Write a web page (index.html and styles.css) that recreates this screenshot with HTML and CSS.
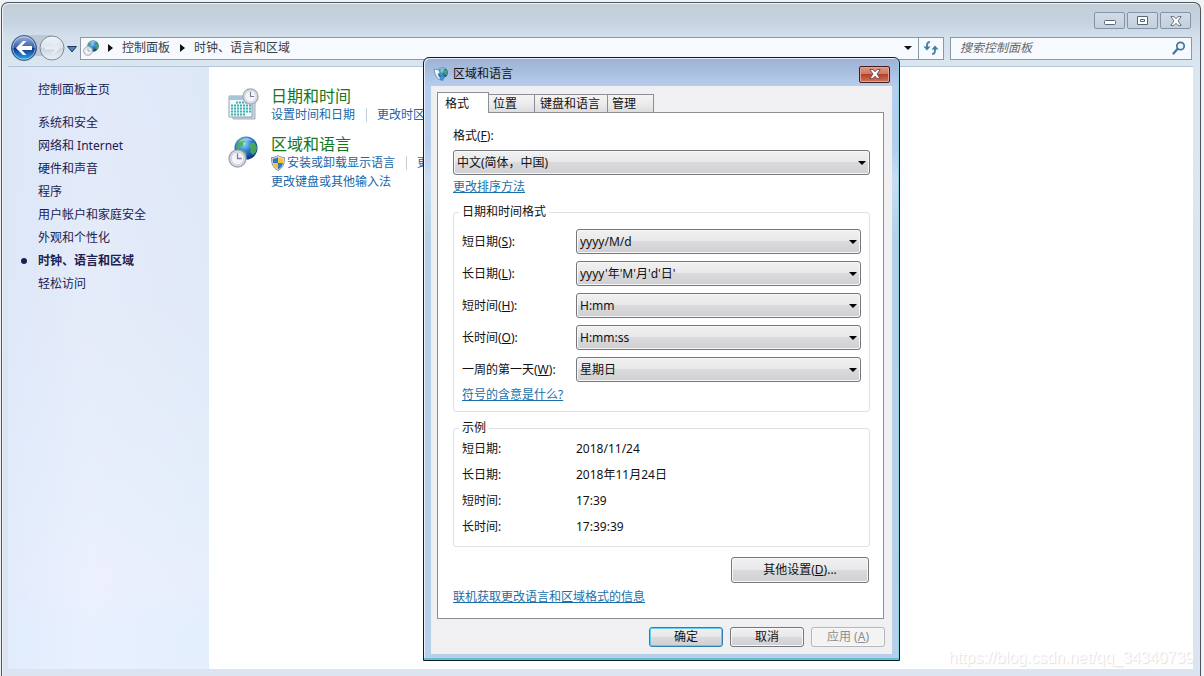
FILE: index.html
```html
<!DOCTYPE html>
<html lang="zh-CN">
<head>
<meta charset="utf-8">
<title>时钟、语言和区域</title>
<link rel="stylesheet" href="styles.css">
</head>
<body>
<svg class="defs" width="0" height="0" aria-hidden="true">
  <defs>
    <radialGradient id="globe" cx="0.4" cy="0.3" r="0.75"><stop offset="0" stop-color="#9fe0ff"/><stop offset="0.45" stop-color="#2f7fd6"/><stop offset="1" stop-color="#0a2a78"/></radialGradient>
    <linearGradient id="back" x1="0" y1="0" x2="0" y2="1"><stop offset="0" stop-color="#9fb6dc"/><stop offset="0.48" stop-color="#3560ae"/><stop offset="0.5" stop-color="#0c2f86"/><stop offset="1" stop-color="#2fb2f0"/></linearGradient>
    <linearGradient id="fwd" x1="0" y1="0" x2="0" y2="1"><stop offset="0" stop-color="#f1f4f8"/><stop offset="0.5" stop-color="#dde3ec"/><stop offset="0.52" stop-color="#cbd3df"/><stop offset="1" stop-color="#eef3f9"/></linearGradient>
    <symbol id="clock" viewBox="0 0 18 18"><circle cx="9" cy="9" r="8" fill="#dfe2ea" stroke="#a3a9b3" stroke-width="1.4"/><circle cx="9" cy="9" r="6" fill="#f4f5f8" stroke="#c2c7d2" stroke-width="0.8"/><path d="M9 4v5h4" fill="none" stroke="#7b7f9c" stroke-width="1.2"/></symbol>
    <symbol id="world" viewBox="0 0 24 24"><circle cx="12" cy="12" r="11.5" fill="url(#globe)"/><path d="M4 6c2-3 5-4 8-4l-1 3-2 2v3l-3 1-2 3-2-3zM16 8l4-2 3 5-1 5-3 3-3-3 1-3-2-2zM7 14l4 1 2 3-3 4-3-3z" fill="#4fb04e" opacity="0.85"/><path d="M5 6c4-5 11-5 14-1-5-1-9 0-14 1z" fill="#fff" opacity="0.4"/></symbol>
  </defs>
</svg>
<div class="window">
  <header class="titlebar">
    <button class="winbtn" aria-label="最小化"><svg width="12" height="8" viewBox="0 0 12 8"><rect x="0.5" y="3.5" width="11" height="4" rx="1" fill="#fff" stroke="#5a6675"/></svg></button>
    <button class="winbtn" aria-label="最大化"><svg width="11" height="9" viewBox="0 0 11 9"><path d="M0.5 0.5h10v8h-10zM3.5 3.5h4v2h-4z" fill="#fff" stroke="#5a6675"/></svg></button>
    <button class="winbtn" aria-label="关闭"><svg width="12" height="10" viewBox="0 0 12 10"><path d="M0.8 0.6h3.2L6 2.8 8 0.6h3.2L8 5l3.2 4.4H8L6 7.2 4 9.4H0.8L4 5z" fill="#fff" stroke="#5a6675" stroke-width="0.9"/></svg></button>
  </header>
  <nav class="navbar" aria-label="导航">
    <div class="history">
      <svg width="68" height="28" viewBox="0 0 68 28" role="img" aria-label="后退和前进">
        <path d="M14 1h28l4 13-4 8H14z" fill="#bcc8d6"/>
        <circle cx="14" cy="14" r="12.5" fill="url(#back)" stroke="#41577f"/>
        <circle cx="14" cy="14" r="11.2" fill="none" stroke="#dbe8fa" stroke-width="0.8" opacity="0.7"/>
        <path d="M6 14l7-7h3.4l-4.600 5H22v4H11.800l4.600 5H13z" fill="#fff"/>
        <circle cx="42" cy="14" r="12" fill="url(#fwd)" stroke="#7e8a9b"/>
        <path d="M50 14l-6-6h-3l4 4.500h-10v3h10l-4 4.500h3z" fill="#e8edf3"/>
        <path d="M57.500 12.500h9L62 18z" fill="#4b86b8" stroke="#203a66"/>
      </svg>
    </div>
    <div class="address">
      <svg width="18" height="18" viewBox="0 0 18 18" aria-hidden="true"><use href="#world" x="5" y="1" width="12" height="12"/><use href="#clock" x="1" y="7" width="10" height="10"/></svg>
      <i class="crumb"></i><a href="#">控制面板</a>
      <i class="crumb"></i><a href="#">时钟、语言和区域</a>
      <button class="drop" aria-label="以前的位置"><i class="arrow"></i></button>
      <button class="refresh" aria-label="刷新"><svg width="16" height="14" viewBox="0 0 16 14"><path d="M7 1C4 1 4 3 4 6M9 13c3 0 3-2 3-5" fill="none" stroke="#4b86a8" stroke-width="2"/><path d="M0.500 5.500h7L4 9.500zM8.500 8.500h7L12 4.500z" fill="#3c7ea6"/></svg></button>
    </div>
    <label class="search"><input type="search" placeholder="搜索控制面板" aria-label="搜索控制面板"><svg width="14" height="14" viewBox="0 0 14 14" aria-hidden="true"><circle cx="8.500" cy="5" r="3.700" fill="#eef6fc" stroke="#43759d" stroke-width="1.700"/><path d="M5.600 7.800L1.500 12.500" stroke="#43759d" stroke-width="2.200" stroke-linecap="round"/></svg></label>
  </nav>
  <div class="content">
    <aside class="sidebar">
      <a class="home" href="#">控制面板主页</a>
      <a href="#">系统和安全</a>
      <a href="#">网络和 Internet</a>
      <a href="#">硬件和声音</a>
      <a href="#">程序</a>
      <a href="#">用户帐户和家庭安全</a>
      <a href="#">外观和个性化</a>
      <a class="current" href="#">时钟、语言和区域</a>
      <a href="#">轻松访问</a>
    </aside>
    <main class="main">
      <section class="category">
        <svg width="32" height="32" viewBox="0 0 32 32" aria-hidden="true"><path d="M3 9h24v22H5z" fill="#c9d1da" stroke="#a9b2bd"/><path d="M1 8h23v21H1z" fill="#f3fafb" stroke="#8fa5b5"/><path d="M1 8h23v4H1z" fill="#a9c3d8"/><path d="M8 14.500h15M3 17.500h20M3 20.500h20M3 23.500h20M3 26.500h14" stroke="#38b0b6" stroke-width="2" stroke-dasharray="2 1"/><use href="#clock" x="14" y="0" width="17" height="17"/></svg>
        <div>
          <h2><a href="#">日期和时间</a></h2>
          <p><a href="#">设置时间和日期</a><i class="sep"></i><a href="#">更改时区</a></p>
        </div>
      </section>
      <section class="category">
        <svg width="32" height="34" viewBox="0 0 32 34" aria-hidden="true"><use href="#world" x="6" y="0" width="24" height="24"/><use href="#clock" x="0" y="13" width="19" height="19"/></svg>
        <div>
          <h2><a href="#">区域和语言</a></h2>
          <p><svg class="shield" width="14" height="16" viewBox="0 0 14 16" aria-hidden="true"><path d="M7 0.500c2 1.500 4 2 6.500 2 0 6-1 10-6.500 13C1.500 12.500.5 8.500.5 2.500 3 2.500 5 2 7 .5z" fill="#e7eaee" stroke="#8a8f98"/><path d="M7 2v6H2c-.3-1.500-.3-3-.3-4.400C4 3.500 5.500 3 7 2zM7 8h5c-.6 3-2 5-5 6.300z" fill="#3477bd"/><path d="M7 2c1.500 1 3 1.500 5.300 1.600 0 1.400 0 2.900-.3 4.400H7zM7 8v6.300C4 13 2.600 11 2 8z" fill="#f2c53d"/></svg><a href="#">安装或卸载显示语言</a><i class="sep"></i><a href="#">更改显示语言</a></p>
          <p><a href="#">更改键盘或其他输入法</a></p>
        </div>
      </section>
    </main>
  </div>
  <div class="watermark">https://blog.csdn.net/qq_34340739</div>
</div>

<form class="dialog" role="dialog" aria-labelledby="dialog-title">
  <header class="dialog-title">
    <svg width="15" height="16" viewBox="0 0 15 16" aria-hidden="true"><use href="#world" x="4" y="1" width="11" height="11"/><path d="M1 3l5 1 1 3-2 1 3 6-3-1-3-5z" fill="#e8f5ff" stroke="#4d7fae" stroke-width="0.700"/><path d="M8 9l4 1-2 5-3-1z" fill="#3f8fd2"/></svg>
    <h1 id="dialog-title">区域和语言</h1>
    <button class="close" type="button" aria-label="关闭"><svg width="12" height="10" viewBox="0 0 12 10"><path d="M0.800 0.600h3.200L6 2.800 8 0.600h3.200L8 5l3.200 4.400H8L6 7.200 4 9.400H0.800L4 5z" fill="#fff" stroke="#6d4250" stroke-width="0.900"/></svg></button>
  </header>
  <div class="dialog-body">
    <div class="tabs" role="tablist">
      <button type="button" class="tab active" role="tab" aria-selected="true">格式</button>
      <button type="button" class="tab" role="tab">位置</button>
      <button type="button" class="tab wide" role="tab">键盘和语言</button>
      <button type="button" class="tab" role="tab">管理</button>
    </div>
    <div class="panel" role="tabpanel">
      <label for="format">格式(<u>F</u>):</label>
      <span class="combo format"><select id="format"><option>中文(简体，中国)</option></select></span>
      <a class="link" href="#">更改排序方法</a>
      <fieldset class="formats">
        <legend>日期和时间格式</legend>
        <div class="grid">
          <label for="sd">短日期(<u>S</u>):</label><span class="combo"><select id="sd"><option>yyyy/M/d</option></select></span>
          <label for="ld">长日期(<u>L</u>):</label><span class="combo"><select id="ld"><option>yyyy'年'M'月'd'日'</option></select></span>
          <label for="st">短时间(<u>H</u>):</label><span class="combo"><select id="st"><option>H:mm</option></select></span>
          <label for="lt">长时间(<u>O</u>):</label><span class="combo"><select id="lt"><option>H:mm:ss</option></select></span>
          <label for="fd">一周的第一天(<u>W</u>):</label><span class="combo"><select id="fd"><option>星期日</option></select></span>
        </div>
        <a class="link" href="#">符号的含意是什么?</a>
      </fieldset>
      <fieldset class="examples">
        <legend>示例</legend>
        <dl>
          <dt>短日期:</dt><dd>2018/11/24</dd>
          <dt>长日期:</dt><dd>2018年11月24日</dd>
          <dt>短时间:</dt><dd>17:39</dd>
          <dt>长时间:</dt><dd>17:39:39</dd>
        </dl>
      </fieldset>
      <button type="button" class="btn more">其他设置(<u>D</u>)...</button>
      <a class="link" href="#">联机获取更改语言和区域格式的信息</a>
    </div>
    <footer class="actions">
      <button type="button" class="btn default">确定</button>
      <button type="button" class="btn">取消</button>
      <button type="button" class="btn" disabled>应用 (<u>A</u>)</button>
    </footer>
  </div>
</form>
</body>
</html>
```

FILE: styles.css
```css
* { box-sizing: border-box; }
body {
  margin: 0;
  min-height: 100vh;
  padding: 2px 3px 0 1px;
  display: flex;
  background: #f0f2f3;
  color: #111;
  font: 12px/16px "Noto Sans", "Noto Sans CJK SC", sans-serif;
}
button, input, select { font: inherit; color: inherit; margin: 0; padding: 0; }
h1, h2, p, dl, dd { margin: 0; font-weight: 400; }
a { text-decoration: none; color: inherit; }
svg { flex: none; display: block; }
.defs { position: absolute; }

.window {
  position: relative;
  flex: 1;
  display: flex;
  flex-direction: column;
  padding: 0 7px 7px 6px;
  border: 1px solid #4a5560;
  border-bottom: 0;
  border-radius: 7px 7px 0 0;
  box-shadow: inset 1px 1px 0 #eef4fa;
  background: linear-gradient(#c3cdd7, #c4d2e0 18px, #d3e0ec 34px, #dae6f0 64px, #dbe4f0);
}
.titlebar { display: flex; justify-content: flex-end; gap: 2px; height: 31px; padding: 9px 2px 0 0; }
.winbtn {
  width: 31px; height: 17px;
  display: grid; place-items: center;
  border: 1px solid #8494a6;
  border-radius: 2px;
  background: linear-gradient(#d2dce7, #c3cfdc);
}
.navbar { display: flex; align-items: center; height: 32px; padding: 0 1px 4px 2px; }
.history { width: 70px; }
.address, .search {
  display: flex; align-items: center;
  height: 23px;
  border: 1px solid #8b98a6;
  background: #f6fafe;
  color: #3a4047;
}
.address { flex: 1; padding-left: 1px; }
.crumb { margin: 0 9px 0 8px; border: 4px solid transparent; border-left: 5px solid #111; border-right: 0; }
a + .crumb { margin: 0 9px 0 10px; }
.arrow { display: block; border: 4px solid transparent; border-top-color: #111; border-bottom: 0; }
.address button { height: 21px; display: grid; place-items: center; border: 0; background: none; }
.address .drop { margin-left: auto; width: 20px; }
.address .refresh { width: 25px; border-left: 1px solid #8b98a6; }
.search { width: 242px; margin-left: 6px; padding: 0 5px 0 9px; }
.search input { flex: 1; min-width: 0; border: 0; outline: 0; background: none; font-style: italic; }
.search input::placeholder { color: #62676c; }

.content { flex: 1; display: flex; border-top: 1px solid #b4c6d8; background: #fff; }
.sidebar {
  width: 201px;
  padding: 12px 0 0 30px;
  display: flex; flex-direction: column; gap: 1px;
  color: #1b2150;
  background: linear-gradient(90deg, rgba(220, 231, 250, .5), rgba(240, 240, 253, .3) 40%, rgba(224, 234, 248, .3)), linear-gradient(#dce7f7, #e0e9f7 40%, #e6f0fc 75%, #ecf0fe 85%, #e5f1ff 93%);
}
.sidebar a { line-height: 22px; }
.sidebar .home { margin-bottom: 10px; }
.sidebar .current { display: flex; align-items: center; margin-left: -17px; font-weight: 700; }
.current::before { content: ""; width: 6px; height: 6px; margin-right: 11px; border-radius: 50%; background: #1b2150; }
.main { flex: 1; padding: 20px 20px 0 19px; color: #1a66a8; }
.category { display: flex; gap: 11px; min-height: 48px; white-space: nowrap; }
.category > svg { margin-top: 1px; }
.category h2 { color: #14761e; font-size: 16px; line-height: 18px; }
.category p { display: flex; align-items: center; line-height: 19px; }
.shield { margin-right: 2px; }
.sep { width: 1px; height: 14px; margin: 0 10px 0 11px; background: #c6d0da; }
.watermark {
  position: absolute; right: 6px; bottom: 8px;
  font: 16px/20px "Liberation Sans", sans-serif;
  color: #fff;
  text-shadow: 1px 1px 1px #dedede;
}

.dialog {
  position: absolute; left: 423px; top: 57px;
  width: 477px;
  padding: 0 7px 6px;
  border: 1px solid #0c1d26;
  border-radius: 6px 6px 0 0;
  box-shadow: inset 0 -2px 0 #62c1cf, inset 1px 1px 0 #e4f0fa, inset -1px 0 0 #8fd0e4;
  background: linear-gradient(#9db1d4, #b6cdec 28px, #b5cdec 90px, #c9def3 121px, #b5cfe6 180px, #b9cee8);
}
.dialog-title { display: flex; align-items: center; gap: 5px; height: 28px; padding: 4px 2px 0 2px; }
.dialog h1 { flex: 1; font-size: 12px; }
.close {
  width: 31px; height: 17px;
  display: grid; place-items: center;
  border: 1px solid #431c20;
  border-radius: 2px;
  box-shadow: inset 0 0 0 1px #e4a392;
  background: linear-gradient(#dd9580, #cd7762 48%, #b54027 50%, #cf765b);
}
.dialog-body { padding: 6px 8px 7px 6px; background: #f0eff1; }
.tabs { display: flex; align-items: flex-end; height: 20px; }
.tab {
  width: 46px; height: 18px;
  padding-left: 4px;
  text-align: left;
  line-height: 17px;
  border: 1px solid #8b8e93;
  border-left-width: 0;
  border-bottom: 0;
  background: linear-gradient(#f4f4f5, #ececed 50%, #dddde0);
}
.tab.wide { width: 73px; padding-left: 5px; }
.tab.active { width: 52px; height: 21px; margin-bottom: -1px; padding-left: 7px; z-index: 1; border-left-width: 1px; background: #fff; }
.panel {
  display: flex; flex-direction: column; align-items: flex-start;
  padding: 15px 13px 13px 15px;
  border: 1px solid #8b8e93;
  background: #fff;
}
.link { color: #1a6fa8; text-decoration: underline; }
.combo { position: relative; display: block; }
.combo::after { content: ""; position: absolute; right: 4px; top: 11px; border: 4px solid transparent; border-top-color: #000; border-bottom: 0; pointer-events: none; }
.combo select { display: block; width: 100%; height: 25px; padding-left: 3px; appearance: none; }
.combo select, .btn {
  border: 1px solid #74777c;
  border-radius: 3px;
  box-shadow: inset 0 0 0 1px #f8f8f9;
  background: linear-gradient(#f1f1f2, #e8e8ea 48%, #dadadd 50%, #d0d0d3);
}
.format { align-self: stretch; margin: 6px 0 4px; }
fieldset { align-self: stretch; min-width: 0; margin: 0; padding: 0 8px; border: 1px solid #dde1e6; border-radius: 3px; }
legend { margin-left: -3px; padding: 0 3px; }
.formats { margin-top: 9px; padding-bottom: 8px; }
.grid { display: grid; grid-template-columns: 114px 1fr; row-gap: 7px; align-items: center; margin: 9px 0 5px; }
.examples { margin-top: 8px; padding-bottom: 11px; }
dl { display: grid; grid-template-columns: 114px 1fr; row-gap: 10px; margin-top: 5px; }
.btn { width: 74px; height: 20px; }
.more { width: 138px; height: 26px; align-self: flex-end; margin: 10px 1px 6px; }
.default { border-color: #2c7fb4; box-shadow: inset 0 0 0 1px #5fd0f4; }
.btn:disabled { color: #8d8d8f; border-color: #b4b6ba; background: #f3f3f4; }
.actions { display: flex; justify-content: flex-end; gap: 7px; margin: 8px -1px 0 0; }
```
